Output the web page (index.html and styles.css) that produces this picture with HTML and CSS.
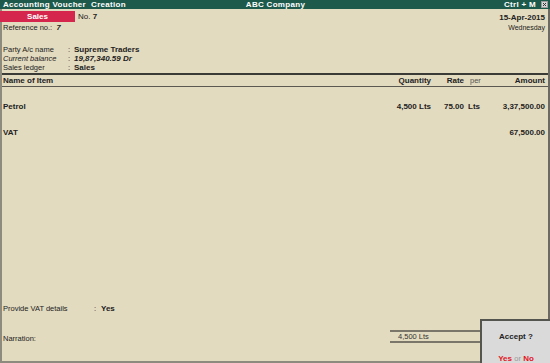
FILE: index.html
```html
<!DOCTYPE html>
<html lang="en">
<head>
    <meta charset="UTF-8">
    <title>Accounting Voucher Creation</title>
    <link rel="stylesheet" href="styles.css">
</head>
<body>
    <div class="window">

        <!-- Title Bar -->
        <div class="titlebar">
            <span class="title">Accounting Voucher&nbsp; Creation</span>
            <span class="company">ABC Company</span>
            <span class="shortcut">
                Ctrl + M
                <svg class="close" width="7" height="7" viewBox="0 0 7 7">
                    <rect x="0.5" y="0.5" width="6" height="6" fill="#d6d6d6" stroke="#9a9a9a"/>
                    <path d="M2 2 L5 5 M5 2 L2 5" stroke="#333" stroke-width="1"/>
                </svg>
            </span>
        </div>

        <div class="content">

            <!-- Voucher Head -->
            <div class="voucher-head">
                <div class="head-left">
                    <div class="head-line">
                        <span class="sales-badge">Sales</span>
                        <span class="voucher-no">No. <b>7</b></span>
                    </div>
                    <div class="ref">Reference no.: &nbsp;<b><i>7</i></b></div>
                </div>
                <div class="head-right">
                    <div class="date">15-Apr-2015</div>
                    <div class="day">Wednesday</div>
                </div>
            </div>

            <!-- Party Details -->
            <div class="party">
                <span>Party A/c name</span><span>:</span><b>Supreme Traders</b>
                <i>Current balance</i><span>:</span><b><i>19,87,340.59 Dr</i></b>
                <span>Sales ledger</span><span>:</span><b>Sales</b>
            </div>

            <!-- Items -->
            <div class="items">
                <div class="item-row item-header">
                    <span>Name of Item</span>
                    <span class="num">Quantity</span>
                    <span class="num">Rate</span>
                    <span class="per">per</span>
                    <span class="num">Amount</span>
                </div>
                <div class="item-row first-item">
                    <span>Petrol</span>
                    <span class="num">4,500 Lts</span>
                    <span class="num">75.00</span>
                    <span class="per-val">Lts</span>
                    <span class="num">3,37,500.00</span>
                </div>
                <div class="item-row tax-item">
                    <span>VAT</span>
                    <span></span>
                    <span></span>
                    <span></span>
                    <span class="num">67,500.00</span>
                </div>
            </div>

            <!-- Footer -->
            <div class="vat-details">
                <span>Provide VAT details</span><span>:</span><b>Yes</b>
            </div>
            <div class="footer-row">
                <span class="narration">Narration:</span>
                <div class="total-box">4,500 Lts</div>
            </div>
        </div>

        <!-- Accept Dialog -->
        <div class="accept">
            <div class="accept-title">Accept ?</div>
            <div class="accept-options"><b>Yes</b> <span>or</span> <b>No</b></div>
        </div>
    </div>
</body>
</html>
```

FILE: styles.css
```css
/* Global Styles */
body {
    margin: 0;
    font-family: "Liberation Sans", Arial, sans-serif;
    font-size: 7.5px;
    color: #222;
    background-color: #e3dbbf;
}

.window {
    width: 550px;
    height: 363px;
    display: flex;
    flex-direction: column;
    position: relative;
    overflow: hidden;
}

/* Title Bar */
.titlebar {
    height: 9px;
    line-height: 9px;
    background-color: #1d5a4b;
    color: #fff;
    font-weight: bold;
    font-size: 8px;
    letter-spacing: 0.3px;
    display: grid;
    grid-template-columns: 1fr auto 1fr;
    align-items: center;
    padding: 0 2px 0 3px;
}

.shortcut {
    justify-self: end;
    display: flex;
    align-items: center;
    gap: 5px;
}

.close {
    display: block;
}

/* Content */
.content {
    flex: 1;
    display: flex;
    flex-direction: column;
    border-left: 2px solid #8d8a7e;
    border-right: 2px solid #6c6a62;
    border-bottom: 2px solid #8d8a7e;
    padding: 2px 3px 0 1px;
}

.voucher-head {
    display: flex;
    justify-content: space-between;
}

.head-line {
    display: flex;
    align-items: center;
    gap: 3px;
    margin-left: -3px;
}

.sales-badge {
    width: 75px;
    height: 11px;
    line-height: 11px;
    background-color: #d5264d;
    color: #fff;
    font-weight: bold;
    font-size: 8px;
    text-align: center;
}

.voucher-no {
    font-size: 8px;
}

.ref {
    line-height: 9px;
    margin-top: 1px;
}

.head-right {
    text-align: right;
    padding-top: 2px;
}

.date {
    font-weight: bold;
    font-size: 8px;
    line-height: 10px;
}

.day {
    font-size: 7px;
    line-height: 9px;
}

/* Party Details */
.party {
    display: grid;
    grid-template-columns: 65px 6px auto;
    line-height: 9px;
    margin-top: 13px;
    justify-content: start;
}

.party b {
    font-size: 8px;
}

/* Items */
.items {
    margin: 1px -3px 0 -1px;
    border-top: 2px solid #3a3a36;
}

.item-row {
    display: grid;
    grid-template-columns: 1fr 60px 33px 19px 62px;
    padding: 0 3px 0 1px;
    font-weight: bold;
    font-size: 8px;
    line-height: 9px;
}

.item-header {
    line-height: 11px;
    border-bottom: 1px solid #5a5850;
}

.num {
    text-align: right;
}

.per {
    font-weight: normal;
    font-size: 7.5px;
    color: #555;
    padding-left: 6px;
}

.per-val {
    padding-left: 4px;
}

.first-item {
    margin-top: 15px;
}

.tax-item {
    margin-top: 17px;
}

/* Footer */
.vat-details {
    margin-top: auto;
    display: grid;
    grid-template-columns: 91px 7px auto;
    justify-content: start;
    line-height: 9px;
}

.vat-details b {
    font-size: 8px;
}

.footer-row {
    display: flex;
    justify-content: space-between;
    align-items: center;
    margin-top: 17px;
    margin-bottom: 18px;
}

.narration {
    padding-top: 3px;
}

.total-box {
    width: 87px;
    line-height: 9px;
    padding-left: 8px;
    border-top: 2px solid #7a766a;
    border-bottom: 2px solid #7a766a;
    margin-right: 60px;
    color: #333;
}

/* Accept Dialog */
.accept {
    position: absolute;
    right: 0;
    bottom: 0;
    width: 68px;
    height: 42px;
    background-color: #dadada;
    border: 2px solid #55554f;
    border-right: none;
    border-bottom: none;
    text-align: center;
    font-size: 8px;
}

.accept-title {
    font-weight: bold;
    margin-top: 11px;
    color: #222;
}

.accept-options {
    margin-top: 13px;
    color: #e3131c;
}

.accept-options span {
    color: #999;
    font-size: 7.5px;
}
```
